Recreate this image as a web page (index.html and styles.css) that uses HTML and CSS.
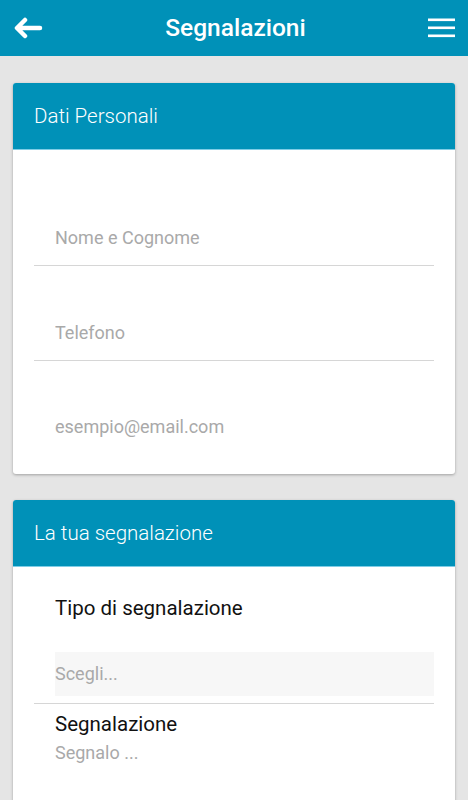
FILE: index.html
```html
<!DOCTYPE html>
<html lang="it">
<head>
    <meta charset="UTF-8">
    <meta name="viewport" content="width=device-width, initial-scale=1.0">
    <title>Segnalazioni</title>
    <link rel="stylesheet" href="styles.css">
</head>

<body>
    <header class="topbar">
        <a class="topbar-btn" href="#">
            <svg width="30" height="22" viewBox="0 0 30 22">
                <path d="M27 11H5M12 3L4 11l8 8" fill="none" stroke="#fff" stroke-width="4.5" stroke-linecap="round" stroke-linejoin="round"/>
            </svg>
        </a>
        <h1>Segnalazioni</h1>
        <a class="topbar-btn" href="#">
            <svg width="27" height="20" viewBox="0 0 27 20">
                <rect x="0" y="0.5" width="27" height="2.6" fill="#fff"/>
                <rect x="0" y="8.5" width="27" height="2.6" fill="#fff"/>
                <rect x="0" y="16.5" width="27" height="2.6" fill="#fff"/>
            </svg>
        </a>
    </header>

    <main class="content">
        <section class="card">
            <h2 class="card-title">Dati Personali</h2>
            <div class="card-body first">
                <div class="field">
                    <input type="text" placeholder="Nome e Cognome">
                </div>
                <div class="field">
                    <input type="tel" placeholder="Telefono">
                </div>
                <div class="field last">
                    <input type="email" placeholder="esempio@email.com">
                </div>
            </div>
        </section>

        <section class="card">
            <h2 class="card-title">La tua segnalazione</h2>
            <div class="card-body">
                <div class="field-label">
                    <label for="tipo">Tipo di segnalazione</label>
                    <div class="select-box" id="tipo">Scegli...</div>
                </div>
                <div class="field-label">
                    <label for="testo">Segnalazione</label>
                    <textarea id="testo" placeholder="Segnalo ..."></textarea>
                </div>
            </div>
        </section>
    </main>
</body>
</html>
```

FILE: styles.css
```css
body {
    font-family: Roboto, "Liberation Sans", sans-serif;
    background: #e5e5e5;
    margin: 0;
    padding: 0;
}

.topbar {
    height: 56px;
    background-color: #0091b8;
    display: flex;
    align-items: center;
    justify-content: space-between;
    padding: 0 13px;
}

.topbar h1 {
    color: #fff;
    margin: 0;
    font-size: 24.5px;
    font-weight: 500;
    margin-top: -1px;
}

.topbar-btn {
    display: flex;
    align-items: center;
}

.content {
    padding: 27px 13px 0;
    display: flex;
    flex-direction: column;
    gap: 26px;
}

.card {
    background-color: #fff;
    border-radius: 3px;
    box-shadow: 0 1px 3px rgba(0, 0, 0, 0.3);
    overflow: hidden;
}

.card-title {
    margin: 0;
    height: 66px;
    display: flex;
    align-items: center;
    padding: 0 21px;
    background-color: #0091b8;
    border-bottom: 1px solid #7fcde6;
    color: #fff;
    font-size: 20.5px;
    font-weight: 300;
}

.card-body {
    padding: 0 21px;
}

.card-body.first {
    padding-top: 21px;
}

.field {
    height: 94px;
    border-bottom: 1px solid #d6d6d6;
    display: flex;
    align-items: flex-end;
}

.field.last {
    border-bottom: none;
    height: 93px;
    margin-bottom: 20px;
}

.field input {
    width: 100%;
    border: none;
    outline: none;
    font-family: inherit;
    font-size: 18px;
    line-height: 22px;
    color: #333;
    padding: 0 21px;
    margin-bottom: 16px;
    background: transparent;
}

input::placeholder, textarea::placeholder {
    color: #a9a9a9;
}

.field-label label {
    display: block;
    padding: 29px 21px 0;
    font-size: 20.5px;
    line-height: 24px;
    color: #111;
}

.field-label:nth-child(2) label {
    padding-top: 8px;
}

.field-label:first-child {
    border-bottom: 1px solid #d6d6d6;
}

.select-box {
    margin: 32px 0 0 21px;
    height: 44px;
    line-height: 44px;
    background: #f7f7f7;
    font-size: 18px;
    color: #a9a9a9;
    border-bottom: 7px solid #fff;
}

.field-label textarea {
    display: block;
    width: 100%;
    box-sizing: border-box;
    border: none;
    outline: none;
    resize: none;
    font-family: inherit;
    font-size: 18px;
    line-height: 22px;
    padding: 6px 21px;
    height: 80px;
}
```
